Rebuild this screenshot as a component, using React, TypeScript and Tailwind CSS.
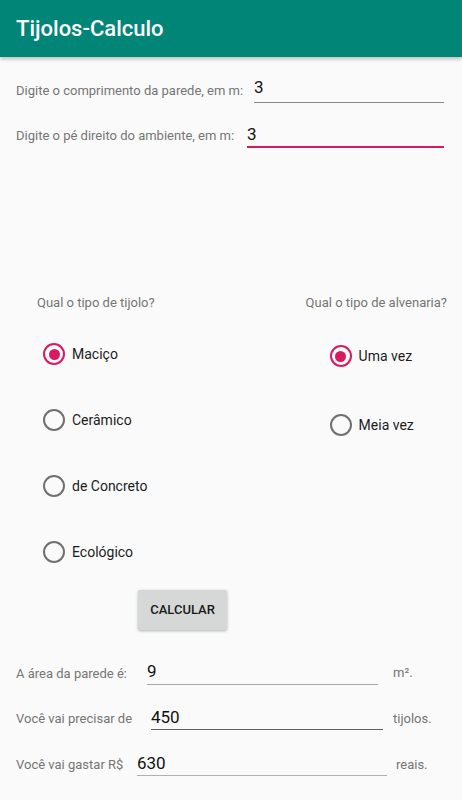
import React from "react";

function Radio({ label, checked }: { label: string; checked?: boolean }) {
  return (
    <div className="flex items-center">
      <div
        className={
          checked
            ? "flex h-[22px] w-[22px] items-center justify-center rounded-full border-2 border-[#D81B60]"
            : "flex h-[22px] w-[22px] items-center justify-center rounded-full border-2 border-[#707070]"
        }
      >
        {checked ? <div className="h-[11px] w-[11px] rounded-full bg-[#D81B60]" /> : null}
      </div>
      <span className="ml-[7px] text-[14px] leading-[16px] text-[#1c1c1c]">{label}</span>
    </div>
  );
}

export default function App() {
  return (
    <div className="h-[800px] w-[462px] overflow-hidden bg-[#fafafa] font-['Roboto',sans-serif]">
      <div className="relative z-10 flex h-[57px] items-center bg-[#008577] px-4 shadow-[0_2px_4px_rgba(0,0,0,0.25)]">
        <span className="text-[22px] font-medium leading-[26px] text-white">Tijolos-Calculo</span>
      </div>

      {/* Input row 1 */}
      <div className="mt-[20px] flex">
        <div className="pl-4 pt-[5.5px] text-[13px] leading-[16px] text-[#757575]">
          Digite o comprimento da parede, em m:
        </div>
        <div className="ml-auto mr-[18px] w-[190px] border-b border-[#8a8a8a] pb-[5px] text-[17px] leading-[20px] text-[#111]">
          3
        </div>
      </div>

      {/* Input row 2 */}
      <div className="mt-[21px] flex">
        <div className="pl-4 pt-[3.5px] text-[13px] leading-[16px] text-[#757575]">
          Digite o pé direito do ambiente, em m:
        </div>
        <div className="ml-auto mr-[18px] w-[197px] border-b-2 border-[#D81B60] pb-[2px] text-[17px] leading-[20px] text-[#111]">
          3
        </div>
      </div>

      {/* Radio groups */}
      <div className="mt-[146.5px] flex items-start justify-between pl-[37px] pr-[15px]">
        <div className="flex flex-col">
          <div className="text-[13px] leading-[16px] text-[#757575]">Qual o tipo de tijolo?</div>
          <div className="ml-[6px] mt-[10.5px] flex flex-col">
            <div className="flex h-[66px] items-center">
              <Radio label="Maciço" checked />
            </div>
            <div className="flex h-[66px] items-center">
              <Radio label="Cerâmico" />
            </div>
            <div className="flex h-[66px] items-center">
              <Radio label="de Concreto" />
            </div>
            <div className="flex h-[66px] items-center">
              <Radio label="Ecológico" />
            </div>
          </div>
        </div>
        <div className="flex flex-col">
          <div className="text-[13px] leading-[16px] text-[#757575]">Qual o tipo de alvenaria?</div>
          <div className="ml-[24px] mt-[11px] flex flex-col">
            <div className="flex h-[69px] items-center">
              <Radio label="Uma vez" checked />
            </div>
            <div className="flex h-[69px] items-center">
              <Radio label="Meia vez" />
            </div>
          </div>
        </div>
      </div>

      {/* Button */}
      <div className="mt-[5px] flex">
        <div className="ml-[138px] flex h-[40px] w-[89px] items-center justify-center rounded-[2px] bg-[#d6d7d7] text-[13px] font-medium leading-[16px] text-[#1a1a1a] shadow-[0_1px_3px_rgba(0,0,0,0.3)]">
          CALCULAR
        </div>
      </div>

      {/* Result row A */}
      <div className="mt-[31px] flex items-start">
        <div className="w-[147px] pl-4 pt-[4.5px] text-[13px] leading-[16px] text-[#757575]">
          A área da parede é:
        </div>
        <div className="w-[231px] border-b border-[#a6a6a6] pb-[3px] text-[17px] leading-[20px] text-[#111]">
          9
        </div>
        <div className="ml-[15px] pt-[3.5px] text-[13px] leading-[16px] text-[#757575]">m².</div>
      </div>

      {/* Result row B */}
      <div className="mt-[22px] flex items-start">
        <div className="w-[151px] pl-4 pt-[3.5px] text-[13px] leading-[16px] text-[#757575]">
          Você vai precisar de
        </div>
        <div className="w-[232px] border-b border-[#5f5f5f] pb-[2px] text-[17px] leading-[20px] text-[#111]">
          450
        </div>
        <div className="ml-[10px] pt-[3.5px] text-[13px] leading-[16px] text-[#757575]">tijolos.</div>
      </div>

      {/* Result row C */}
      <div className="mt-[23px] flex items-start">
        <div className="w-[137px] pl-4 pt-[3.5px] text-[13px] leading-[16px] text-[#757575]">
          Você vai gastar R$
        </div>
        <div className="w-[250px] border-b border-[#b0b0b0] pb-[2px] text-[17px] leading-[20px] text-[#111]">
          630
        </div>
        <div className="ml-[9px] pt-[3.5px] text-[13px] leading-[16px] text-[#757575]">reais.</div>
      </div>
    </div>
  );
}
